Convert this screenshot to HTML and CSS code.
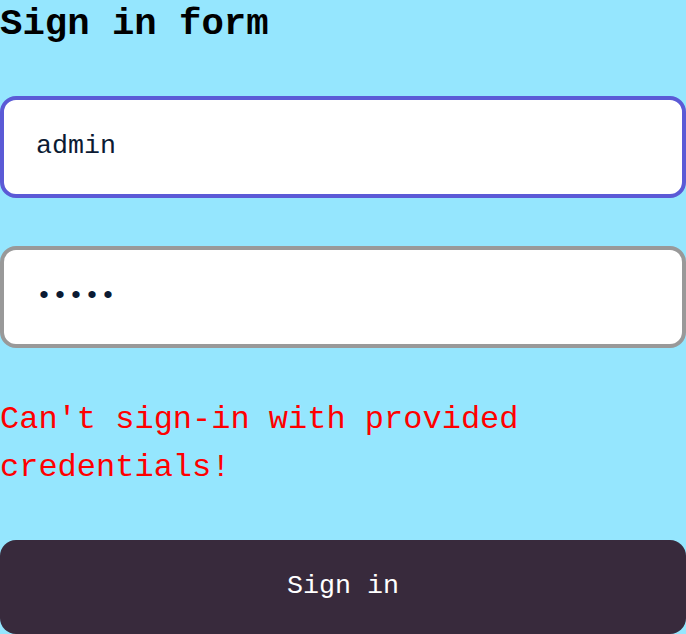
FILE: index.html
```html
<!DOCTYPE html>
<html lang="en">
<head>
<meta charset="utf-8">
<title>Sign in form</title>
<link rel="stylesheet" href="styles.css">
</head>
<body>
<form class="form">
  <h1 class="title">Sign in form</h1>
  <input class="field field--active" type="text" value="admin">
  <input class="field" type="password" value="admin">
  <p class="error">Can't sign-in with provided credentials!</p>
  <button class="submit" type="button">Sign in</button>
</form>
</body>
</html>
```

FILE: styles.css
```css
html, body {
  margin: 0;
  padding: 0;
  background: #95e6fe;
}
body {
  font-family: "Liberation Mono", "Courier New", monospace;
}
.form {
  display: flex;
  flex-direction: column;
  gap: 48px;
}
.title {
  margin: 0;
  font-size: 37.3px;
  line-height: 48px;
  font-weight: 700;
  color: #000;
  height: 48px;
}
.field {
  box-sizing: border-box;
  width: 100%;
  height: 102px;
  margin: 0;
  padding: 0 32px 3px;
  border: 4px solid #999999;
  border-radius: 16px;
  background: #fff;
  font-family: "Liberation Mono", monospace;
  font-size: 26.67px;
  color: #0b1a33;
  outline: none;
}
.field--active {
  border-color: #5b5ad6;
}
.error {
  margin: 0;
  color: #ff0000;
  font-size: 32px;
  line-height: 48px;
}
.submit {
  box-sizing: border-box;
  width: 100%;
  height: 94px;
  margin: 0;
  padding: 0 0 2px;
  border: 0;
  border-radius: 16px;
  background: #382a3c;
  color: #fff;
  font-family: "Liberation Mono", monospace;
  font-size: 26.67px;
}
```
